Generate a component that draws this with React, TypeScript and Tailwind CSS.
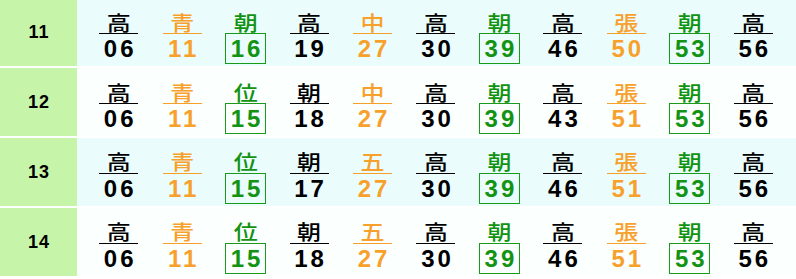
type Tone = 'k' | 'o' | 'g';

interface Stop {
  kana: string;
  min: string;
  tone: Tone;
}

const s = (kana: string, min: string, tone: Tone): Stop => ({ kana, min, tone });

const rows: { hour: string; stops: Stop[] }[] = [
  {
    hour: '11',
    stops: [
      s('高', '06', 'k'), s('青', '11', 'o'), s('朝', '16', 'g'), s('高', '19', 'k'),
      s('中', '27', 'o'), s('高', '30', 'k'), s('朝', '39', 'g'), s('高', '46', 'k'),
      s('張', '50', 'o'), s('朝', '53', 'g'), s('高', '56', 'k'),
    ],
  },
  {
    hour: '12',
    stops: [
      s('高', '06', 'k'), s('青', '11', 'o'), s('位', '15', 'g'), s('朝', '18', 'k'),
      s('中', '27', 'o'), s('高', '30', 'k'), s('朝', '39', 'g'), s('高', '43', 'k'),
      s('張', '51', 'o'), s('朝', '53', 'g'), s('高', '56', 'k'),
    ],
  },
  {
    hour: '13',
    stops: [
      s('高', '06', 'k'), s('青', '11', 'o'), s('位', '15', 'g'), s('朝', '17', 'k'),
      s('五', '27', 'o'), s('高', '30', 'k'), s('朝', '39', 'g'), s('高', '46', 'k'),
      s('張', '51', 'o'), s('朝', '53', 'g'), s('高', '56', 'k'),
    ],
  },
  {
    hour: '14',
    stops: [
      s('高', '06', 'k'), s('青', '11', 'o'), s('位', '15', 'g'), s('朝', '18', 'k'),
      s('五', '27', 'o'), s('高', '30', 'k'), s('朝', '39', 'g'), s('高', '46', 'k'),
      s('張', '51', 'o'), s('朝', '53', 'g'), s('高', '56', 'k'),
    ],
  },
];

const textTone: Record<Tone, string> = {
  k: 'text-black',
  o: 'text-[#f7a12c]',
  g: 'text-[#129312]',
};

function Entry({ stop }: { stop: Stop }) {
  const boxed = stop.tone === 'g';
  const lineColor = boxed
    ? 'border border-[#1a9a1a] w-[41px]'
    : stop.tone === 'o'
      ? 'border-t border-[#f5a02a] w-[39px]'
      : 'border-t border-black w-[39px]';
  return (
    <div className="flex flex-col items-center">
      <span
        className={`block h-[22px] scale-y-[0.85] text-[24px] font-medium leading-[22px] font-['Noto_Sans_CJK_JP',sans-serif] ${textTone[stop.tone]}`}
      >
        {stop.kana}
      </span>
      <div className={`flex h-[31px] items-center justify-center ${lineColor}`}>
        <span className={`pl-[3px] text-[24px] font-bold tracking-[3px] leading-none ${textTone[stop.tone]}`}>
          {stop.min}
        </span>
      </div>
    </div>
  );
}

export default function App() {
  return (
    <div className="h-[279px] w-[796px] overflow-hidden bg-white font-['Liberation_Sans',sans-serif]">
      <div className="-mt-[2px]">
        {rows.map((row, i) => (
          <div key={row.hour} className="flex h-[70px] border-b-2 border-white">
            {/* hour cell */}
            <div className="flex w-[77px] items-center justify-center bg-[#c6f5aa] pl-[1px] text-[18px] font-bold tracking-[1px] text-black">
              {row.hour}
            </div>
            <div
              className={`grid flex-1 grid-cols-11 pl-[10px] pr-[11px] pt-[13px] ${
                i % 2 === 0 ? 'bg-[#eafcfc]' : 'bg-[#fbfffe]'
              }`}
            >
              {row.stops.map((stop, j) => (
                <Entry key={j} stop={stop} />
              ))}
            </div>
          </div>
        ))}
      </div>
    </div>
  );
}
